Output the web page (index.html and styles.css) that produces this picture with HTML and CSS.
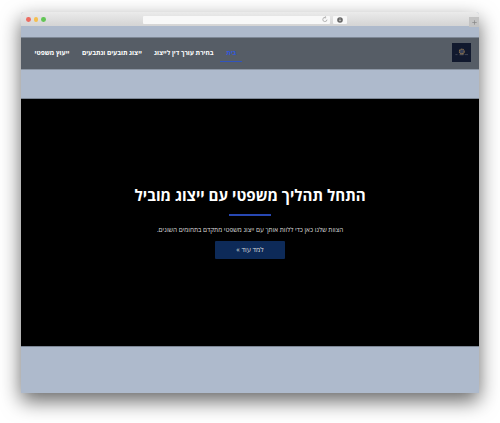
FILE: index.html
```html
<!DOCTYPE html>
<html lang="he">
<head>
<meta charset="utf-8">
<title>ייצוג משפטי</title>
<link rel="stylesheet" href="styles.css">
</head>
<body>
<div class="window">
  <div class="chrome">
    <i class="dot red"></i><i class="dot yellow"></i><i class="dot green"></i>
    <div class="address">
      <svg width="6" height="7" viewBox="0 0 6 7"><path d="M3.2 1.4A2.1 2.1 0 1 0 5 3.6M2.8 .2L4.1 1.4L2.8 2.4" fill="none" stroke="#999" stroke-width=".7"/></svg>
    </div>
    <div class="download">
      <svg width="6" height="6" viewBox="0 0 6 6"><circle cx="3" cy="3" r="2.8" fill="#666"/><path d="M3 1.3V4M1.9 3L3 4.2L4.1 3" fill="none" stroke="#ddd" stroke-width=".6"/></svg>
    </div>
    <div class="tab">
      <svg width="5" height="5" viewBox="0 0 5 5"><path d="M2.5 .3V4.7M.3 2.5H4.7" stroke="#858585" stroke-width=".7"/></svg>
    </div>
  </div>
  <header class="header" dir="rtl">
    <div class="logo">
      <svg width="19" height="19" viewBox="0 0 19 19"><circle cx="9.8" cy="8.5" r="2.4" fill="#35405a" stroke="#80694a" stroke-width="1.2" stroke-dasharray="1.3 .5"/><path d="M7.8 11H11.8" stroke="#8f7a57" stroke-width=".8"/><path d="M3.4 11.6H5.5M7.5 11.8H11.5M12.7 11.6H16" stroke="#59606d" stroke-width=".6"/></svg>
    </div>
    <nav class="nav">
      <a class="home"><span>בית</span></a>
      <a class="choose"><span>בחירת עורך דין לייצוג</span></a>
      <a class="claims"><span>ייצוג תובעים ונתבעים</span></a>
      <a class="advice"><span>ייעוץ משפטי</span></a>
    </nav>
  </header>
  <main class="hero" dir="rtl">
    <h1>התחל תהליך משפטי עם ייצוג מוביל</h1>
    <div class="rule"></div>
    <p>הצוות שלנו כאן כדי ללוות אותך עם ייצוג משפטי מתקדם בתחומים השונים.</p>
    <a class="button"><span>למד עוד »</span></a>
  </main>
</div>
</body>
</html>
```
FILE: styles.css
```css
* { box-sizing: border-box; }
body { margin: 0; height: 423px; overflow: hidden; background: #fff; font-family: "Open Sans", "Noto Sans", sans-serif; }
.window { width: 458px; height: 381px; margin: 12px 0 0 21px; background: #aebacc; border-radius: 3px 3px 0 0; box-shadow: 0 8px 20px rgba(0,0,0,.6); }
.chrome { position: relative; display: flex; align-items: center; height: 14px; padding: 1px 0 0 5px; border-radius: 3px 3px 0 0; background: linear-gradient(#ebebeb, #d4d4d4); }
.dot { width: 4.8px; height: 4.8px; margin-right: 2.8px; border-radius: 50%; }
.red { background: #ed6b60; }
.yellow { background: #f5bf4f; }
.green { background: #62c655; }
.address { display: flex; align-items: center; justify-content: flex-end; width: 187px; height: 8px; margin-left: 94.7px; padding-right: 2px; border-radius: 1px; background: #f8f8f8; }
.download { display: flex; align-items: center; justify-content: center; width: 14px; height: 8px; margin-left: 3px; border-radius: 1px; background: #f8f8f8; }
.tab { position: absolute; right: 0; bottom: -1px; display: flex; align-items: center; justify-content: center; width: 10px; height: 10px; background: #c3c3c3; }
.header { display: flex; align-items: center; height: 33px; margin-top: 11px; padding: 0 8px 2px 13px; background: #565d66; border-top: 1px solid #7d8795; border-bottom: 1px solid #8c96a4; }
.logo { width: 19px; height: 19px; background: #11192e; }
.logo svg { display: block; }
.nav { display: flex; flex: 1; justify-content: flex-end; gap: 12px; color: #fff; font-size: 6.7px; font-weight: 700; line-height: 18px; white-space: nowrap; }
.nav a { display: flex; justify-content: center; height: 18px; }
.nav span { transform: scaleX(.97); }
.nav .home { width: 22px; margin-left: -6px; color: #3158dc; border-bottom: 1px solid #3154bd; }
.choose { width: 60px; }
.claims { width: 60px; }
.advice { width: 36px; }
.hero { display: flex; flex-direction: column; align-items: center; height: 249px; margin-top: 28px; padding-top: 84px; background: #000; border-top: 1px solid #7d8795; border-bottom: 1px solid #7d8795; color: #fff; white-space: nowrap; }
h1 { margin: 0; font-size: 15.6px; font-weight: 700; line-height: 24px; transform: scaleX(.97); }
.rule { width: 42px; height: 2px; margin-top: 7px; background: #2848b3; }
p { margin: 8px 0 0; color: #ddd; font-size: 6.7px; line-height: 12px; transform: scaleX(.96); }
.button { display: flex; justify-content: center; width: 70px; height: 18px; margin-top: 5px; background: #0d2a58; color: #ddd; font-size: 6.9px; line-height: 18px; border-radius: 1px; }
```
